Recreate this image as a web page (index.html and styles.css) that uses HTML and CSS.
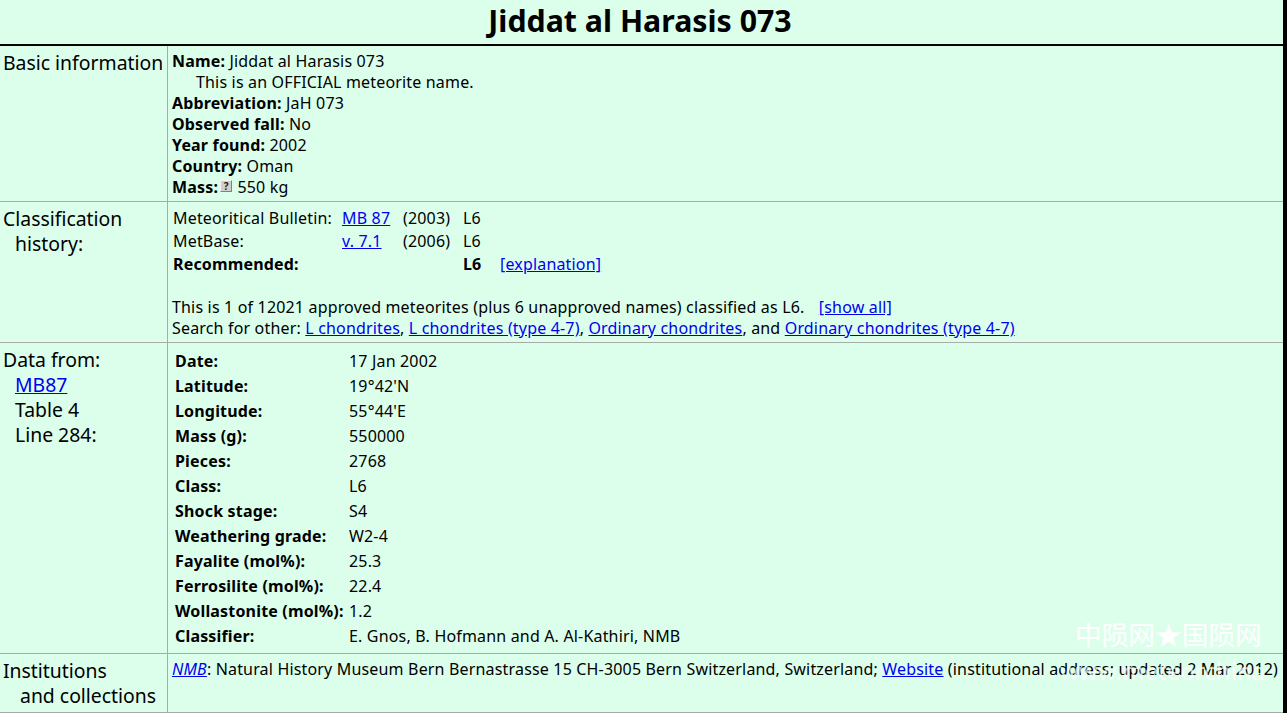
FILE: index.html
```html
<!DOCTYPE html>
<html lang="en">
<head>
<meta charset="utf-8">
<title>Jiddat al Harasis 073</title>
<link rel="stylesheet" href="styles.css">
</head>
<body>
<div class="page">
  <h1 class="title">Jiddat al Harasis 073</h1>
  <section class="row row-basic">
    <div class="label">Basic information</div>
    <div class="body">
      <div><b>Name:</b> Jiddat al Harasis 073</div>
      <div class="indent">This is an OFFICIAL meteorite name.</div>
      <div><b>Abbreviation:</b> JaH 073</div>
      <div><b>Observed fall:</b> No</div>
      <div><b>Year found:</b> 2002</div>
      <div><b>Country:</b> Oman</div>
      <div><b>Mass:</b><span class="help">?</span> 550 kg</div>
    </div>
  </section>
  <section class="row row-class">
    <div class="label">Classification<div class="sub">history:</div></div>
    <div class="body">
      <div class="history">
        <span>Meteoritical Bulletin:</span><a href="#">MB 87</a><span>(2003)</span><span>L6</span><span></span>
        <span>MetBase:</span><a href="#" class="short">v. 7.1</a><span>(2006)</span><span>L6</span><span></span>
        <b>Recommended:</b><span></span><span></span><b>L6</b><a href="#">[explanation]</a>
      </div>
      <div class="summary">This is 1 of 12021 approved meteorites (plus 6 unapproved names) classified as L6. <a href="#" class="showall">[show all]</a></div>
      <div>Search for other: <a href="#">L chondrites</a>, <a href="#">L chondrites (type 4-7)</a>, <a href="#">Ordinary chondrites</a>, and <a href="#">Ordinary chondrites (type 4-7)</a></div>
    </div>
  </section>
  <section class="row row-data">
    <div class="label">Data from:
      <div class="sub"><a href="#">MB87</a></div>
      <div class="sub">Table 4</div>
      <div class="sub">Line 284:</div>
    </div>
    <div class="body">
      <div class="data">
        <b>Date:</b><span>17 Jan 2002</span>
        <b>Latitude:</b><span>19°42'N</span>
        <b>Longitude:</b><span>55°44'E</span>
        <b>Mass (g):</b><span>550000</span>
        <b>Pieces:</b><span>2768</span>
        <b>Class:</b><span>L6</span>
        <b>Shock stage:</b><span>S4</span>
        <b>Weathering grade:</b><span>W2-4</span>
        <b>Fayalite (mol%):</b><span>25.3</span>
        <b>Ferrosilite (mol%):</b><span>22.4</span>
        <b>Wollastonite (mol%):</b><span>1.2</span>
        <b>Classifier:</b><span>E. Gnos, B. Hofmann and A. Al-Kathiri, NMB</span>
      </div>
    </div>
  </section>
  <section class="row row-inst">
    <div class="label">Institutions<div class="sub2">and collections</div></div>
    <div class="body"><a href="#"><i>NMB</i></a>: Natural History Museum Bern Bernastrasse 15 CH-3005 Bern Switzerland, Switzerland; <a href="#">Website</a> (institutional address; updated 2 Mar 2012)</div>
  </section>
  <div class="wm">中陨网★国陨网</div>
  <div class="wm2">www.meteorchina</div>
</div>
</body>
</html>
```
FILE: styles.css
```css
html, body {
  margin: 0;
  padding: 0;
  height: 713px;
  overflow: hidden;
  background: #dcffec;
}
body {
  font-family: "Noto Sans", "Noto Sans CJK SC", sans-serif;
  font-size: 16px;
  line-height: 21px;
  letter-spacing: .17px;
  color: #000;
}
.page {
  position: relative;
  height: 713px;
  box-sizing: border-box;
  border-right: 4px solid #000;
}
a { color: #0000ee; text-decoration: underline; }
.title {
  margin: 0;
  height: 44px;
  padding-right: 3px;
  line-height: 42px;
  font-size: 30.3px;
  font-weight: 700;
  letter-spacing: 0;
  text-align: center;
  border-bottom: 2px solid #000;
}
.row {
  display: flex;
  border-bottom: 1px solid #aaa;
}
.row-basic { height: 155px; }
.row-class { height: 140px; }
.row-data { height: 310px; }
.row-inst { height: 58px; }
.label {
  flex: 0 0 168px;
  box-sizing: border-box;
  padding: 4px 0 0 3px;
  font-size: 19.4px;
  letter-spacing: 0;
  line-height: 25px;
  white-space: nowrap;
  border-right: 1px solid #aaa;
}
.label .sub { padding-left: 12px; }
.label .sub2 { padding-left: 17px; }
.body {
  flex: 1;
  padding: 5px 0 0 4px;
  min-width: 0;
  white-space: nowrap;
}
.indent { padding-left: 24px; }
.help {
  display: inline-block;
  box-sizing: border-box;
  width: 12px;
  height: 12px;
  margin: 0 1px 0 2px;
  vertical-align: 3px;
  background: #d4d0c8;
  border: 1px solid;
  border-color: #f4f4f4 #808080 #808080 #f4f4f4;
  font-size: 10px;
  line-height: 10px;
  font-weight: 700;
  letter-spacing: 0;
  text-align: center;
  color: #222;
}
.history {
  display: grid;
  grid-template-columns: 169px 61px 60px 37px auto;
  grid-auto-rows: 23px;
  justify-content: start;
  padding-left: 1px;
  margin-top: 1px;
}
.summary { margin-top: 20px; }
.showall { margin-left: 10px; }
.data {
  display: grid;
  grid-template-columns: 174px auto;
  grid-auto-rows: 25px;
  justify-content: start;
  padding: 1px 0 0 3px;
  line-height: 25px;
}
.row-inst .body { padding-top: 5px; }
.wm {
  position: absolute;
  left: 1075px;
  top: 619px;
  font-size: 26.7px;
  letter-spacing: 0;
  line-height: 32px;
  color: #fff;
  pointer-events: none;
}
.wm2 {
  position: absolute;
  left: 1060px;
  top: 657px;
  font-size: 24px;
  line-height: 28px;
  letter-spacing: 0;
  color: #fff;
  opacity: .7;
  pointer-events: none;
}
```
